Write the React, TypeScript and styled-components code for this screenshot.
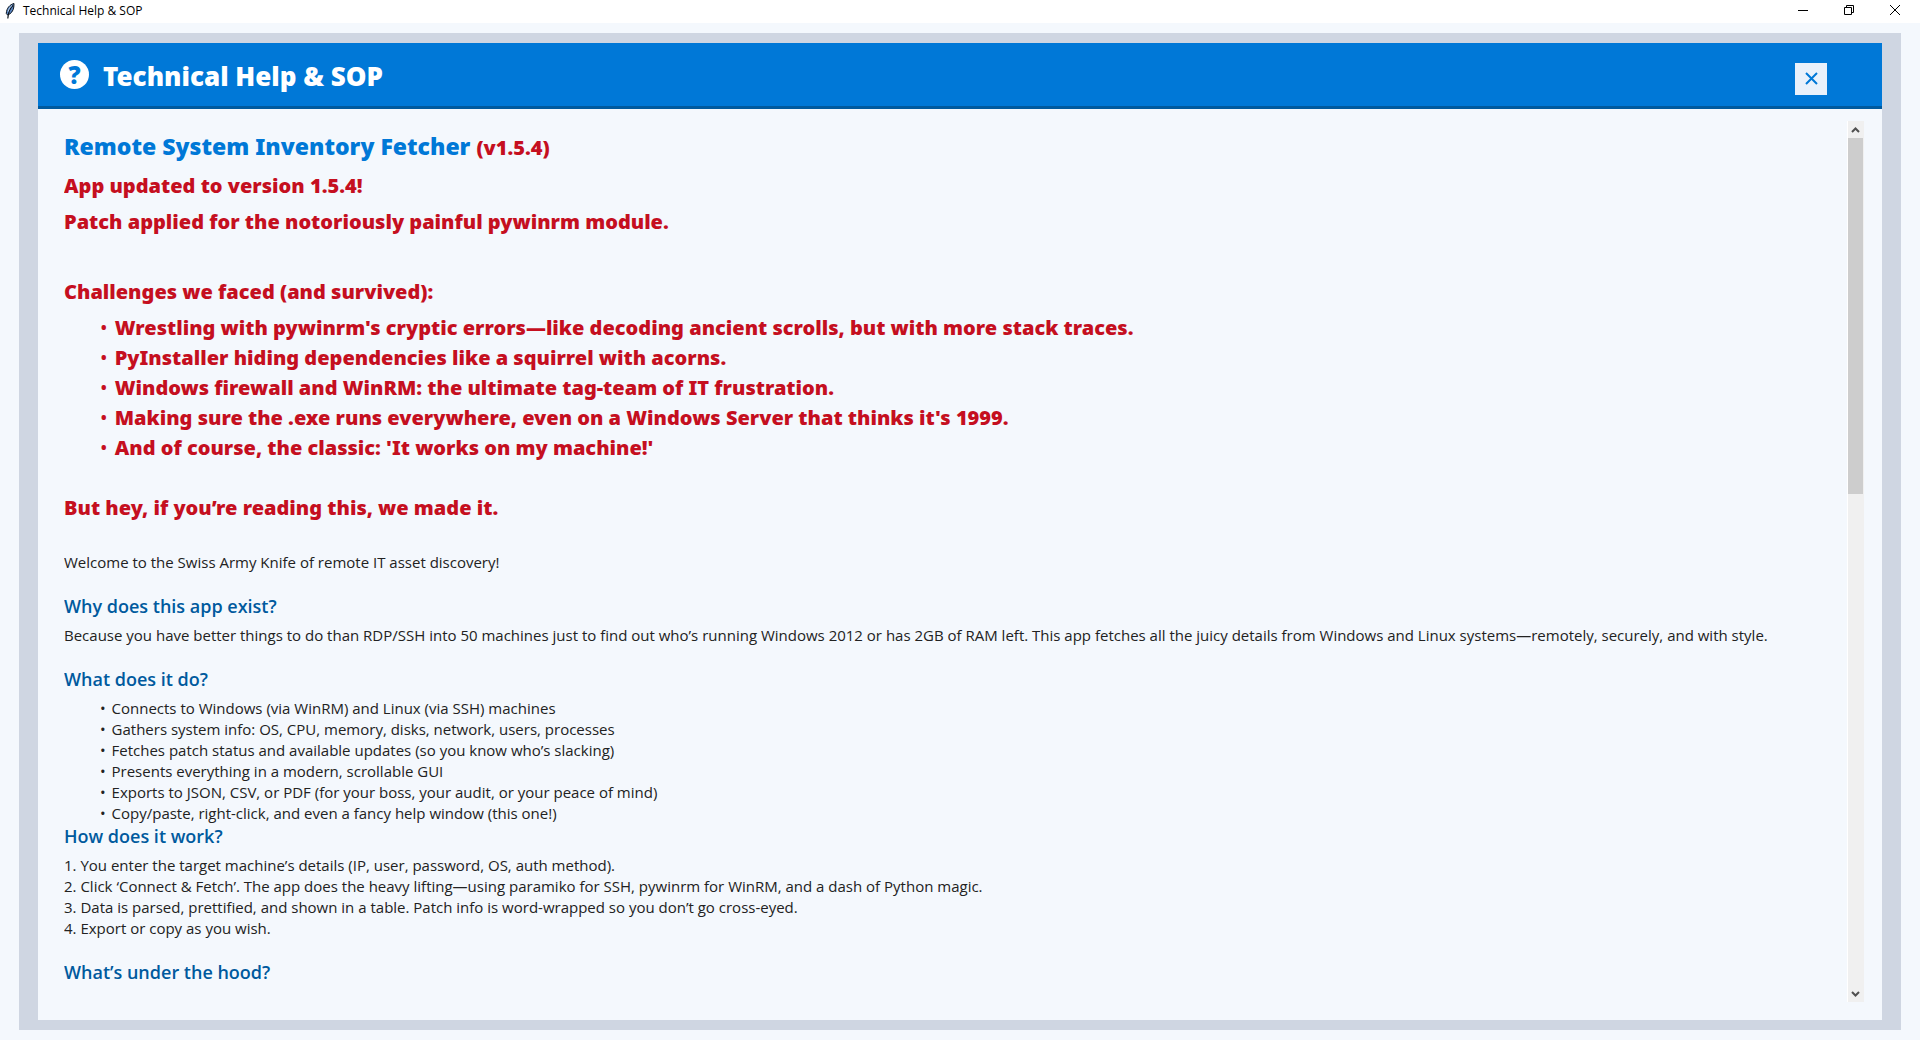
import React from "react";
import styled, { createGlobalStyle } from "styled-components";

const colors = {
  page: "#f4f8fd",
  frame: "#cfd6e2",
  accent: "#0078d7",
  accentDark: "#005a9e",
  alert: "#c50f1f",
  text: "#222222",
};

const GlobalStyle = createGlobalStyle`
  * { box-sizing: border-box; }
  body {
    margin: 0;
    background: ${colors.page};
    font-family: "Segoe UI", "Open Sans", "Noto Sans", sans-serif;
  }
  h1, h2, p, ul, ol { margin: 0; padding: 0; font-weight: inherit; }
  button { border: 0; padding: 0; background: none; font: inherit; }
`;

const Window = styled.div`
  display: flex;
  flex-direction: column;
  height: 100vh;
  overflow: hidden;
`;

const TitleBar = styled.header`
  display: flex;
  align-items: flex-start;
  flex: none;
  height: 23px;
  padding: 0 2px 0 4px;
  background: #ffffff;
`;

const WindowTitle = styled.span`
  flex: 1;
  padding-left: 6px;
  font-size: 12px;
  line-height: 22px;
  color: #000000;
`;

const WindowButton = styled.button`
  display: grid;
  place-items: center;
  width: 46px;
  height: 20px;
`;

const Frame = styled.main`
  display: flex;
  flex: 1;
  min-height: 0;
  margin: 10px 19px;
  padding: 10px 19px;
  background: ${colors.frame};
`;

const Panel = styled.section`
  display: flex;
  flex: 1;
  flex-direction: column;
  min-width: 0;
  background: ${colors.page};
`;

const Banner = styled.div`
  display: flex;
  align-items: center;
  flex: none;
  gap: 14px;
  height: 66px;
  padding: 0 55px 0 22px;
  border-bottom: 3px solid ${colors.accentDark};
  background: ${colors.accent};
`;

const HelpBadge = styled.span`
  display: grid;
  place-items: center;
  width: 29px;
  height: 29px;
  border-radius: 50%;
  background: #ffffff;
  color: ${colors.accent};
  font-family: "Noto Sans", sans-serif;
  font-size: 24px;
  font-weight: 900;
  line-height: 28px;
`;

const BannerTitle = styled.h1`
  && { font-weight: 900; }
  flex: 1;
  color: #ffffff;
  font-family: "Segoe UI Black", "Noto Sans", sans-serif;
  font-size: 26px;
  line-height: 36px;
  padding-top: 2px;
`;

const CloseButton = styled.button`
  && { background: #e9f1fb; }
  display: grid;
  place-items: center;
  width: 32px;
  height: 32px;
  margin-top: 8px;
`;

const Body = styled.div`
  display: flex;
  flex: 1;
  min-height: 0;
  padding: 12px 18px 18px 26px;
`;

const Content = styled.article`
  flex: 1;
  min-width: 0;
  overflow: hidden;
  padding-top: 8px;
  color: ${colors.text};
  font-size: 15px;
  line-height: 21px;
`;

const AppName = styled.h2`
  && { font-weight: 900; margin-bottom: 6px; }
  color: ${colors.accent};
  font-family: "Segoe UI Black", "Noto Sans", sans-serif;
  font-size: 23px;
  line-height: 34px;
`;

const Version = styled.span`
  color: ${colors.alert};
  font-size: 20px;
`;

const Notice = styled.div`
  color: ${colors.alert};
  font-family: "Segoe UI Black", "Noto Sans", sans-serif;
  font-size: 20px;
  font-weight: 900;
  line-height: 30px;
`;

const NoticeLine = styled.p<{ $after: number }>`
  && { margin-bottom: ${(p) => p.$after}px; }
`;

const Bullets = styled.ul<{ $after?: number }>`
  && { margin-bottom: ${(p) => p.$after ?? 0}px; padding-left: 36px; }
  list-style: none;
`;

const Bullet = styled.span`
  margin-right: 2px;
  font-weight: 400;
`;

const Steps = styled.ol`
  && { margin-bottom: 21px; }
  list-style: none;
`;

const Paragraph = styled.p`
  && { margin-bottom: 21px; }
`;

const Heading = styled.h2`
  && { margin-bottom: 7px; font-weight: 600; }
  color: ${colors.accentDark};
  font-size: 18px;
  line-height: 24px;
`;

const ScrollBar = styled.div`
  display: flex;
  flex: none;
  flex-direction: column;
  width: 17px;
  border-left: 1px solid #ffffff;
  background: #f0f0f0;
`;

const ScrollArrow = styled.button`
  display: grid;
  place-items: center;
  width: 15px;
  height: 17px;
`;

const Track = styled.div`
  flex: 1;
  padding-right: 1px;
`;

const Thumb = styled.div`
  height: 42%;
  background: #cdcdcd;
`;

const challenges = [
  "Wrestling with pywinrm's cryptic errors—like decoding ancient scrolls, but with more stack traces.",
  "PyInstaller hiding dependencies like a squirrel with acorns.",
  "Windows firewall and WinRM: the ultimate tag-team of IT frustration.",
  "Making sure the .exe runs everywhere, even on a Windows Server that thinks it's 1999.",
  "And of course, the classic: 'It works on my machine!'",
];

const features = [
  "Connects to Windows (via WinRM) and Linux (via SSH) machines",
  "Gathers system info: OS, CPU, memory, disks, network, users, processes",
  "Fetches patch status and available updates (so you know who’s slacking)",
  "Presents everything in a modern, scrollable GUI",
  "Exports to JSON, CSV, or PDF (for your boss, your audit, or your peace of mind)",
  "Copy/paste, right-click, and even a fancy help window (this one!)",
];

const steps = [
  "You enter the target machine’s details (IP, user, password, OS, auth method).",
  "Click ‘Connect & Fetch’. The app does the heavy lifting—using paramiko for SSH, pywinrm for WinRM, and a dash of Python magic.",
  "Data is parsed, prettified, and shown in a table. Patch info is word-wrapped so you don’t go cross-eyed.",
  "Export or copy as you wish.",
];

const BulletList = ({ items, after }: { items: string[]; after?: number }) => (
  <Bullets $after={after}>
    {items.map((item) => (
      <li key={item}><Bullet>•</Bullet> {item}</li>
    ))}
  </Bullets>
);

const Feather = () => (
  <svg width="13" height="20" viewBox="0 -3 13 20" aria-hidden="true">
    <path d="M10 0.5 C6 1.5 2.5 5 2.3 10.5 L3.6 12 C7 11 9.5 7.5 9.8 4 Z" fill="#5b87c5" stroke="#101820" strokeWidth="1" />
    <path d="M9 2.5 C6 5 4.3 8.5 3.8 15.5" fill="none" stroke="#101820" strokeWidth="1.2" />
    <path d="M8 2.5 C6 4 4.8 6 4.2 8.5" fill="none" stroke="#c6dcf5" strokeWidth="0.9" />
  </svg>
);

const Cross = ({ size, width, color }: { size: number; width: number; color: string }) => (
  <svg width={size} height={size} viewBox={`0 0 ${size} ${size}`} aria-hidden="true">
    <path d={`M1 1 L${size - 1} ${size - 1} M${size - 1} 1 L1 ${size - 1}`} stroke={color} strokeWidth={width} />
  </svg>
);

const Chevron = ({ up }: { up?: boolean }) => (
  <svg width="9" height="8" viewBox="0 0 9 8" aria-hidden="true">
    <path d={up ? "M1 6 L4.5 2.5 L8 6" : "M1 2 L4.5 5.5 L8 2"} fill="none" stroke="#505050" strokeWidth="2" />
  </svg>
);

export default function App() {
  return (
    <Window>
      <GlobalStyle />
      <TitleBar>
        <Feather />
        <WindowTitle>Technical Help &amp; SOP</WindowTitle>
        <WindowButton aria-label="Minimize">
          <svg width="10" height="10" viewBox="0 0 10 10"><path d="M0 5.5 H10" stroke="#000" /></svg>
        </WindowButton>
        <WindowButton aria-label="Restore">
          <svg width="10" height="10" viewBox="0 0 10 10" fill="none" stroke="#000">
            <path d="M0.5 2.5 H7.5 V9.5 H0.5 Z M2.5 2.5 V0.5 H9.5 V7.5 H7.5" />
          </svg>
        </WindowButton>
        <WindowButton aria-label="Close window"><Cross size={12} width={1} color="#000" /></WindowButton>
      </TitleBar>
      <Frame>
        <Panel>
          <Banner>
            <HelpBadge aria-hidden="true">?</HelpBadge>
            <BannerTitle>Technical Help &amp; SOP</BannerTitle>
            <CloseButton aria-label="Close help"><Cross size={13} width={2} color={colors.accent} /></CloseButton>
          </Banner>
          <Body>
            <Content>
              <AppName>Remote System Inventory Fetcher <Version>(v1.5.4)</Version></AppName>
              <Notice>
                <NoticeLine $after={6}>App updated to version 1.5.4!</NoticeLine>
                <NoticeLine $after={40}>Patch applied for the notoriously painful pywinrm module.</NoticeLine>
                <NoticeLine $after={6}>Challenges we faced (and survived):</NoticeLine>
                <BulletList items={challenges} after={30} />
                <NoticeLine $after={29}>But hey, if you’re reading this, we made it.</NoticeLine>
              </Notice>
              <Paragraph>Welcome to the Swiss Army Knife of remote IT asset discovery!</Paragraph>
              <Heading>Why does this app exist?</Heading>
              <Paragraph>
                Because you have better things to do than RDP/SSH into 50 machines just to find out who’s running Windows 2012 or has 2GB of RAM left. This app fetches all the juicy details from Windows and Linux systems—remotely, securely, and with style.
              </Paragraph>
              <Heading>What does it do?</Heading>
              <BulletList items={features} />
              <Heading>How does it work?</Heading>
              <Steps>
                {steps.map((item, i) => <li key={item}>{`${i + 1}. ${item}`}</li>)}
              </Steps>
              <Heading>What’s under the hood?</Heading>
            </Content>
            <ScrollBar>
              <ScrollArrow aria-label="Scroll up"><Chevron up /></ScrollArrow>
              <Track><Thumb /></Track>
              <ScrollArrow aria-label="Scroll down"><Chevron /></ScrollArrow>
            </ScrollBar>
          </Body>
        </Panel>
      </Frame>
    </Window>
  );
}
